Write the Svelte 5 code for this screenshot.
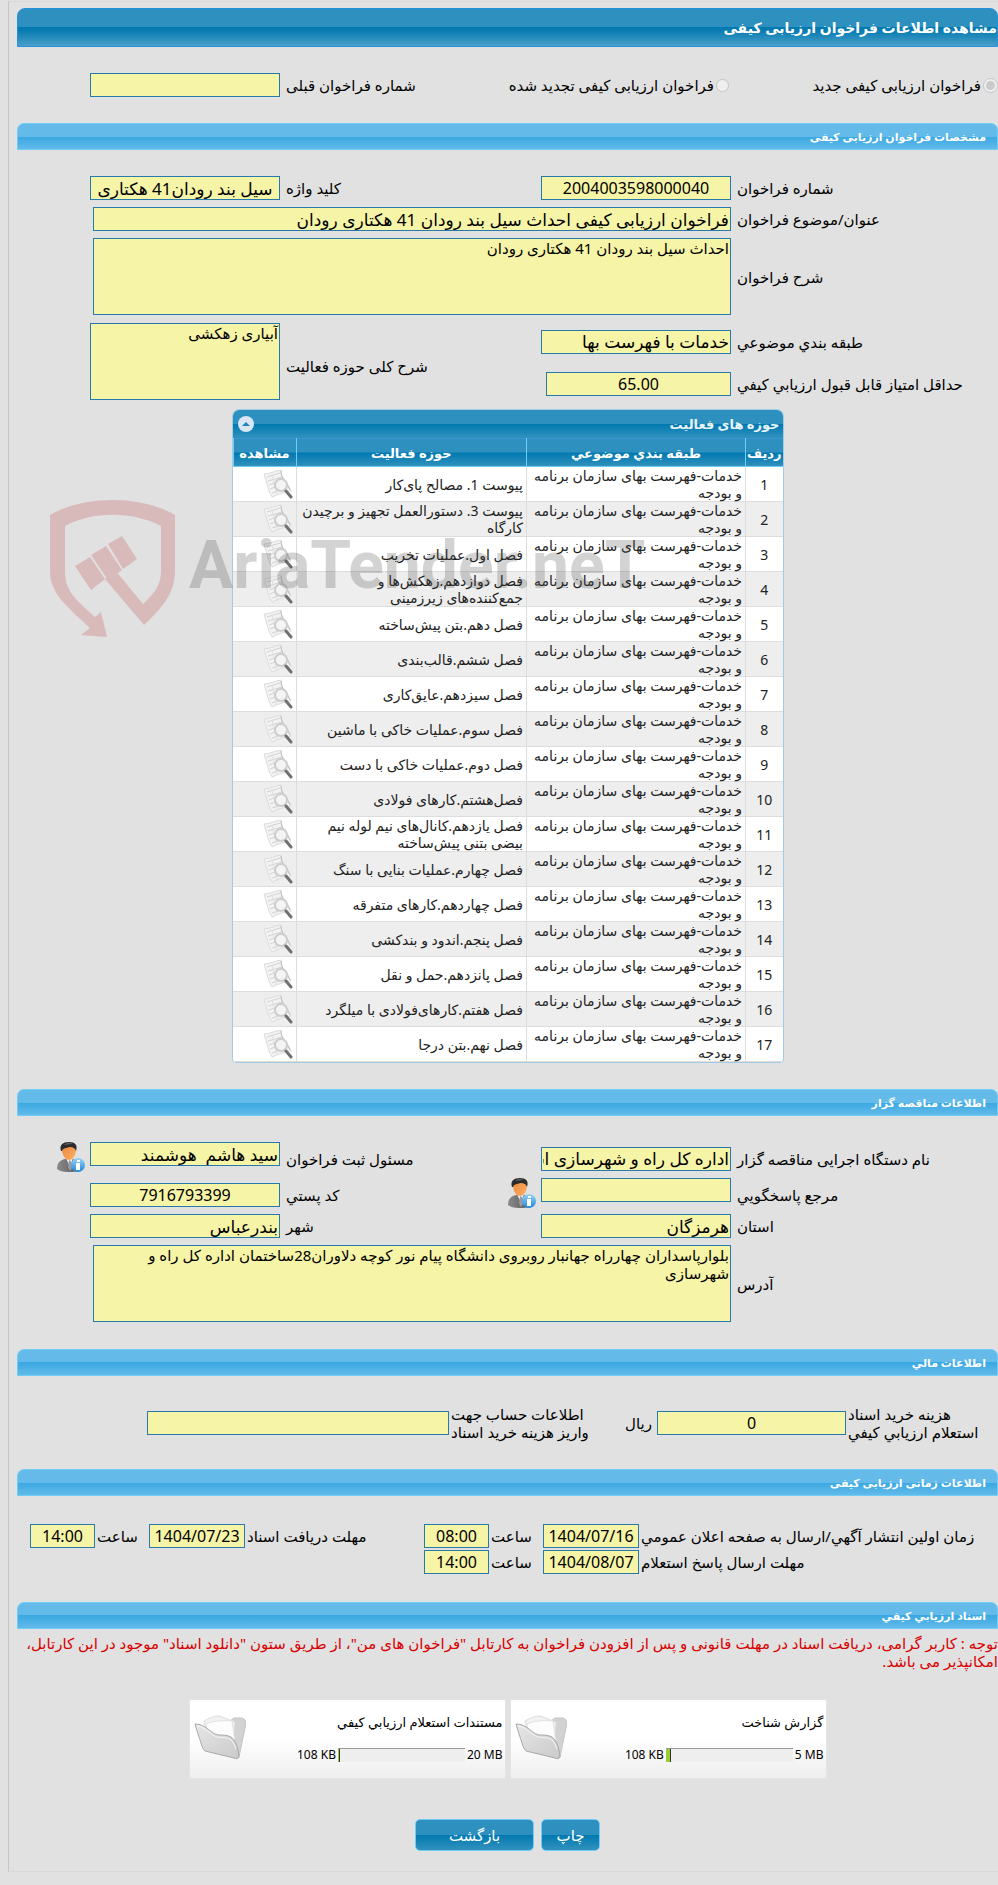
<!--
  Read-only view of a qualitative-evaluation call: the call itself, its
  activity areas, the tendering organisation, fees, dates and documents.
  The whole page runs right to left.
-->
<script>
  const category = 'خدمات-فهرست بهای سازمان برنامه و بودجه';

  const activities = [
    'پیوست 1. مصالح پای‌کار',
    'پیوست 3. دستورالعمل تجهیز و برچیدن کارگاه',
    'فصل اول.عملیات تخریب',
    'فصل دوازدهم.زهکش‌ها و جمع‌کننده‌های زیرزمینی',
    'فصل دهم.بتن پیش‌ساخته',
    'فصل ششم.قالب‌بندی',
    'فصل سیزدهم.عایق‌کاری',
    'فصل سوم.عملیات خاکی با ماشین',
    'فصل دوم.عملیات خاکی با دست',
    'فصل‌هشتم.کارهای فولادی',
    'فصل یازدهم.کانال‌های نیم لوله نیم بیضی بتنی پیش‌ساخته',
    'فصل چهارم.عملیات بنایی با سنگ',
    'فصل چهاردهم.کارهای متفرقه',
    'فصل پنجم.اندود و بندکشی',
    'فصل پانزدهم.حمل و نقل',
    'فصل هفتم.کارهای‌فولادی با میلگرد',
    'فصل نهم.بتن درجا',
  ];

  const documents = [
    { title: 'گزارش شناخت', limit: '5 MB', size: '108 KB', percent: 4 },
    { title: 'مستندات استعلام ارزیابي کیفي', limit: '20 MB', size: '108 KB', percent: 2 },
  ];

  let open = $state(true);
  let kind = $state('new');
</script>

{#snippet person()}
  <svg class="person" viewBox="0 0 28 30" aria-hidden="true">
    <path d="M0 27c0-6 3-9 8-10h8c4 1 7 4 7 8v3c-3 2-8 2-12 2-5 0-9-1-11-3z" fill="url(#suit)" />
    <path d="M9 16l4 9 3-9z" fill="#f4f4f6" />
    <path d="M12 18l2 1 1 7-2 3-2-4z" fill="#9a9aa2" />
    <path d="M5 7c0-4 3-6 7-6s7 2 7 6c0 6-3 11-7 11S5 13 5 7z" fill="url(#skin)" />
    <path d="M4 9C2 3 6 0 12 0s9 3 7 9c-1-3-3-4-6-4-4 1-7 1-8 4z" fill="#2c2c2c" />
    <path d="M7 3c2-2 6-2 9-1-3 0-6 0-9 1z" fill="#777" />
    <circle cx="21" cy="23" r="7" fill="url(#info)" />
    <path d="M20 18h3v2h-3zM19 21h4v7h-4z" fill="#fff" />
  </svg>
{/snippet}

{#snippet folder()}
  <svg class="folder" viewBox="0 0 52 48" aria-hidden="true">
    <path d="M20 8l16-2 4-3 8 0c3 1 4 3 4 5l-7 34-3 1z" fill="#d2d2d2" stroke="#c4c4c4" />
    <path d="M10 6c5-3 10-5 15-5l16 6-2 24-26-12z" fill="#f2f2f2" stroke="#dcdcdc" />
    <path d="M12 9c6-3 15-4 26-3l3 22-28-9z" fill="#fdfdfd" stroke="#e2e2e2" />
    <path d="M1 9c3 0 7 1 10 3 5 3 8 7 13 8 5 0 9 0 13 2 4 3 6 9 7 13l1 7c-1 2-3 2-5 1L11 36c-2-2-3-4-4-8C5 22 3 16 1 9z" fill="url(#flap)" stroke="#a8a8a8" />
    <path d="M3 11c9 1 13 9 20 11 6 1 10 0 14 3 3 3 4 6 5 9" fill="none" stroke="#f6f6f6" />
  </svg>
{/snippet}

{#snippet viewIcon()}
  <svg class="view-icon" viewBox="0 0 30 30" aria-hidden="true">
    <path d="M1 5C7 5 11 2 18 1c0 6 3 9 6 13l4 8c-7 1-13 3-19 6C5 22 4 14 1 5z" fill="#f3f3f3" stroke="#dcdcdc" />
    <path d="M4 8l13-4M5 12l14-4M6 16l8-3M7 20l5-2M9 24l9-3" fill="none" stroke="#d2d2d2" />
    <path d="M9 6l5 20" fill="none" stroke="#e0e0e0" />
    <path d="M18 2c0 6 3 9 6 13l3 6" fill="none" stroke="#bdbdbd" />
    <circle cx="18" cy="16" r="6" fill="#f4f4f4" stroke="#cdcdcd" stroke-width="2" />
    <path d="M23 22l5 6" stroke="#707070" stroke-width="3" stroke-linecap="round" />
  </svg>
{/snippet}

<svg class="defs" aria-hidden="true">
  <defs>
    <linearGradient id="suit" x1="0" x2="1"><stop offset="0" stop-color="#8b8b8b" /><stop offset="1" stop-color="#555" /></linearGradient>
    <linearGradient id="skin" x1="0" x2="1" y2="1"><stop offset="0" stop-color="#e8843c" /><stop offset="1" stop-color="#ffb062" /></linearGradient>
    <linearGradient id="info" x2="0" y2="1"><stop offset="0" stop-color="#9bd4f7" /><stop offset="1" stop-color="#1e86dc" /></linearGradient>
    <linearGradient id="flap" x2="1" y2="1"><stop offset="0" stop-color="#e6e6e6" /><stop offset="1" stop-color="#cacaca" /></linearGradient>
  </defs>
</svg>

<main class="page" dir="rtl" lang="fa">
  <h1 class="title">مشاهده اطلاعات فراخوان ارزیابی کیفی</h1>

  <div class="row kinds">
    <div class="kind">
      <input type="radio" id="kind-new" value="new" bind:group={kind} disabled />
      <label for="kind-new">فراخوان ارزیابی کیفی جدید</label>
    </div>
    <div class="kind">
      <input type="radio" id="kind-renewed" value="renewed" bind:group={kind} disabled />
      <label for="kind-renewed">فراخوان ارزیابی کیفی تجدید شده</label>
    </div>
    <label class="label" for="previous">شماره فراخوان قبلی</label>
    <input class="field" id="previous" readonly />
  </div>

  <h2 class="bar">مشخصات فراخوان ارزیابی کیفی</h2>
  <section class="body">
    <div class="row">
      <label class="label" for="number">شماره فراخوان</label>
      <input class="field digits" id="number" value="2004003598000040" readonly />
      <label class="label" for="keyword">کلید واژه</label>
      <input class="field center" id="keyword" value="سیل بند رودان41 هکتاری" readonly />
    </div>
    <div class="row">
      <label class="label" for="subject">عنوان/موضوع فراخوان</label>
      <input class="field wide" id="subject" value="فراخوان ارزیابی کیفی احداث سیل بند رودان 41 هکتاری رودان" readonly />
    </div>
    <div class="row">
      <label class="label" for="description">شرح فراخوان</label>
      <textarea class="field area wide" id="description" readonly>احداث سیل بند رودان 41 هکتاری رودان</textarea>
    </div>
    <div class="row scope">
      <label class="label" for="classification">طبقه بندي موضوعي</label>
      <input class="field" id="classification" value="خدمات با فهرست بها" readonly />
      <label class="label tall" for="scope">شرح کلی حوزه فعالیت</label>
      <textarea class="field area tall" id="scope" readonly>آبیاری زهکشی</textarea>
      <label class="label" for="score">حداقل امتیاز قابل قبول ارزیابي کیفي</label>
      <input class="field digits score" id="score" value="65.00" readonly />
    </div>

    <div class="grid-box">
      <div class="grid-caption">
        <h3 id="grid-title">حوزه های فعالیت</h3>
        <button type="button" class="toggle" aria-label="حوزه های فعالیت" aria-expanded={open} onclick={() => (open = !open)}>
          <svg viewBox="0 0 16 16" aria-hidden="true"><path d="M4 10l4-4 4 4z" fill="#1f84b8" /></svg>
        </button>
      </div>
      {#if open}
        <table aria-labelledby="grid-title">
          <thead>
            <tr>
              <th class="col-number">ردیف</th>
              <th class="col-category">طبقه بندي موضوعي</th>
              <th>حوزه فعالیت</th>
              <th class="col-view">مشاهده</th>
            </tr>
          </thead>
          <tbody>
            {#each activities as activity, i}
              <tr>
                <td class="number">{i + 1}</td>
                <td>{category}</td>
                <td>{activity}</td>
                <td class="view"><a href="#view-{i + 1}" aria-label="مشاهده">{@render viewIcon()}</a></td>
              </tr>
            {/each}
          </tbody>
        </table>
      {/if}
    </div>
  </section>

  <h2 class="bar">اطلاعات مناقصه گزار</h2>
  <section class="body">
    <div class="row contact">
      <label class="label" for="agency">نام دستگاه اجرایی مناقصه گزار</label>
      <input class="field" id="agency" value="اداره کل راه و شهرسازی استان هرمزگان" readonly />
      <label class="label" for="registrar">مسئول ثبت فراخوان</label>
      <div class="with-icon">
        <input class="field" id="registrar" value="سید هاشم  هوشمند" readonly />
        {@render person()}
      </div>
    </div>
    <div class="row contact">
      <label class="label" for="authority">مرجع پاسخگويي</label>
      <div class="with-icon">
        <input class="field" id="authority" readonly />
        {@render person()}
      </div>
      <label class="label" for="postcode">کد پستي</label>
      <input class="field digits" id="postcode" value="7916793399" readonly />
    </div>
    <div class="row">
      <label class="label" for="province">استان</label>
      <input class="field" id="province" value="هرمزگان" readonly />
      <label class="label" for="city">شهر</label>
      <input class="field" id="city" value="بندرعباس" readonly />
    </div>
    <div class="row">
      <label class="label" for="address">آدرس</label>
      <textarea class="field area wide" id="address" readonly>بلوارپاسداران چهارراه جهانبار روبروی دانشگاه پیام نور کوچه دلاوران28ساختمان اداره کل راه و شهرسازی</textarea>
    </div>
  </section>

  <h2 class="bar">اطلاعات مالي</h2>
  <section class="body">
    <div class="fees">
      <label class="label tight" for="fee">هزینه خرید اسناد<br />استعلام ارزیابي کیفي</label>
      <input class="field digits" id="fee" value="0" readonly />
      <span class="unit">ریال</span>
      <label class="label tight" for="account">اطلاعات حساب جهت<br />واریز هزینه خرید اسناد</label>
      <input class="field" id="account" readonly />
    </div>
  </section>

  <h2 class="bar">اطلاعات زمانی ارزیابی کیفی</h2>
  <section class="body">
    <div class="dates">
      <label class="label tight" for="publish-date">زمان اولین انتشار آگهي/ارسال به صفحه اعلان عمومي</label>
      <input class="field digits" id="publish-date" value="1404/07/16" readonly />
      <label class="label tight" for="publish-time">ساعت</label>
      <input class="field digits" id="publish-time" value="08:00" readonly />
      <label class="label tight" for="receive-date">مهلت دریافت اسناد</label>
      <input class="field digits" id="receive-date" value="1404/07/23" readonly />
      <label class="label tight" for="receive-time">ساعت</label>
      <input class="field digits" id="receive-time" value="14:00" readonly />

      <label class="label tight" for="reply-date">مهلت ارسال پاسخ استعلام</label>
      <input class="field digits" id="reply-date" value="1404/08/07" readonly />
      <label class="label tight" for="reply-time">ساعت</label>
      <input class="field digits" id="reply-time" value="14:00" readonly />
    </div>
  </section>

  <h2 class="bar">اسناد ارزیابي کیفي</h2>
  <p class="notice">
    توجه : کاربر گرامی، دریافت اسناد در مهلت قانونی و پس از افزودن فراخوان به کارتابل "فراخوان های من"، از طریق ستون "دانلود اسناد" موجود در این کارتابل، امکانپذیر می باشد.
  </p>

  <div class="documents">
    {#each documents as doc}
      <article class="document">
        <div class="document-info">
          <h3>{doc.title}</h3>
          <div class="usage">
            <span class="limit" dir="ltr">{doc.limit}</span>
            <span class="meter"><span class="used" style="width: {doc.percent}%"></span></span>
            <span dir="ltr">{doc.size}</span>
          </div>
        </div>
        {@render folder()}
      </article>
    {/each}
  </div>

  <div class="actions">
    <button type="button" class="print" onclick={() => window.print()}>چاپ</button>
    <button type="button" class="back" onclick={() => history.back()}>بازگشت</button>
  </div>

  <div class="watermark" dir="ltr" aria-hidden="true">
    <svg viewBox="0 0 125 137">
      <path d="M0 15C34-5 91-5 125 15v56c0 22-12 36-31 54L55 79l10-9 28 34c13-12 18-20 18-33V26C82 11 43 11 15 26v45c0 20 10 28 30 46l6-5 6 25-26-2 9-7C14 104 0 92 0 71z" fill="#bf3b41" />
      <path d="M25 66l15-9 15 22-14 11zM41 55l15-9 16 24-14 10zM58 44l14-8 15 23-14 10z" fill="#bf3b41" />
    </svg>
    <span>AriaTender.neT</span>
  </div>
</main>

<style>
  :global(body) {
    background: #e1e1e1;
  }
  .defs { position: absolute; width: 0; height: 0; }
  .page {
    position: relative;
    margin: 1px 0 14px 8px;
    padding: 6px 0 20px 8px;
    border: 1px solid #d8d8d8;
    border-left-color: #c6c6c6;
    border-right: 0;
    color: #000;
    font-family: "Noto Sans", "DejaVu Sans", sans-serif;
    font-size: 15px;
    line-height: 18px;
  }

  h1, h2, h3, p { margin: 0; }
  .title {
    box-sizing: border-box;
    height: 39px;
    border: 1px solid #2191e2;
    border-radius: 8px 8px 0 0;
    background: linear-gradient(#2e90be 50%, #0079b0 50%, #0a7db3 60%, #4a9fc8);
    color: #fff;
    font-size: 14px;
    line-height: 37px;
  }
  .bar {
    box-sizing: border-box;
    height: 27px;
    padding: 0 11px;
    border: 1px solid #6fcdf6;
    border-radius: 7px 7px 0 0;
    background: linear-gradient(#64bbea 50%, #3aa8e2 50%, #62bae9);
    color: #fff;
    font-size: 11px;
    line-height: 25px;
  }
  .body {
    display: flex;
    flex-direction: column;
    gap: 7px;
    padding: 26px 0 27px;
  }

  .row {
    display: grid;
    grid-template-columns: 267fr 190px 261fr 190px;
    align-items: center;
    padding-left: 73px;
  }
  .kinds {
    grid-template-columns: 269fr 188px 261fr 190px;
    padding-top: 26px;
    padding-bottom: 26px;
  }
  .kind {
    display: flex;
    align-items: center;
    gap: 2px;
    white-space: nowrap;
  }
  .kind input {
    width: 15px;
    height: 15px;
    margin: 0;
  }
  .contact { min-height: 33px; margin-bottom: -4px; }
  .scope {
    grid-template-rows: 37px 48px;
    margin-top: 1px;
  }
  .tall { grid-row: 1 / 3; }
  .scope .area { grid-column: 4; align-self: start; }
  .scope .label.tall { grid-column: 3; }

  .label {
    padding-left: 6px;
    text-align: left;
  }
  .tight { padding-left: 2px; }
  .field {
    box-sizing: border-box;
    width: 100%;
    height: 24px;
    margin: 0;
    padding: 0 1px;
    border: 1px solid #267bab;
    border-radius: 0;
    background: #f6f4a6;
    color: #000;
    font: 17px "Noto Sans", "DejaVu Sans", sans-serif;
    outline: 0;
  }
  .center { text-align: center; }
  .digits { font-size: 16px; text-align: center; }
  .wide {
    grid-column: 2 / 5;
    width: calc(100% - 3px);
  }
  .area {
    display: block;
    height: 77px;
    font-size: 15px;
    line-height: 18px;
    resize: none;
  }
  .score { width: 185px; }
  .with-icon {
    display: flex;
    align-self: start;
    gap: 5px;
  }
  .with-icon .field { flex: none; }
  .person { flex: none; width: 28px; height: 30px; }

  .grid-box {
    align-self: center;
    box-sizing: border-box;
    width: 552px;
    margin: -6px 0 -1px;
    border: 1px solid #a3cbe4;
    border-radius: 7px 7px 4px 4px;
    background: #fff;
    overflow: hidden;
  }
  .grid-caption {
    display: flex;
    align-items: center;
    justify-content: space-between;
    height: 28px;
    padding: 0 3px 0 5px;
    background: linear-gradient(#2e90be 50%, #0079b0 50%, #3391be);
    color: #e8f4fb;
  }
  .grid-caption h3 { font-size: 13px; }
  .toggle {
    width: 16px;
    height: 16px;
    padding: 0;
    border: 0;
    border-radius: 50%;
    background: #dbe6f5;
    cursor: pointer;
  }
  .toggle svg { display: block; }
  table {
    width: 100%;
    table-layout: fixed;
    border-collapse: collapse;
  }
  th {
    box-sizing: border-box;
    height: 28px;
    padding: 0;
    border: 1px solid #6fcdf6;
    border-top-color: #3a92d8;
    border-right: 0;
    background: linear-gradient(#2e90be 50%, #0079b0 50%, #3391be);
    color: #fff;
    font-size: 13px;
  }
  .col-number { width: 37px; }
  .col-category { width: 219px; }
  .col-view { width: 63px; }
  td {
    box-sizing: border-box;
    height: 35px;
    padding: 0 3px;
    border-bottom: 1px solid #ddd;
    border-left: 1px solid #ddd;
    color: #222;
    font-size: 14px;
    line-height: 17px;
  }
  td:last-child { border-left: 0; }
  tr:nth-child(even) td { background: #eee; }
  .number { text-align: center; }
  .view a { display: block; }
  .view-icon { display: block; width: 30px; height: 30px; }

  .fees {
    display: grid;
    grid-template-columns: 152fr 189px 68fr 140fr 302px;
    align-items: center;
    padding: 3px 0 1px 130px;
    white-space: nowrap;
  }
  .unit { padding-right: 5px; }
  .dates {
    display: grid;
    grid-template-columns: 359fr 96px 54px 65px 179fr 96px 54px 65px;
    align-items: center;
    row-gap: 2px;
    padding: 2px 0 1px 13px;
    white-space: nowrap;
  }

  .notice { padding: 5px 0 8px; color: #d90000; }
  .documents {
    display: flex;
    justify-content: center;
    gap: 4px;
    padding: 21px 0 40px;
  }
  .document {
    box-sizing: border-box;
    display: flex;
    justify-content: space-between;
    width: 317px;
    height: 80px;
    padding: 13px 2px 0 4px;
    border: 1px solid #e4e4e4;
    background: linear-gradient(#fff 50%, #eee);
    font-size: 12px;
  }
  .document h3 { font-size: 13px; font-weight: normal; }
  .usage {
    display: flex;
    align-items: center;
    gap: 2px;
    margin-top: 15px;
  }
  .limit { min-width: 28px; text-align: right; }
  .meter {
    box-sizing: border-box;
    width: 127px;
    height: 14px;
    border-top: 1px solid #999;
    background: #eee;
    direction: ltr;
  }
  .used {
    display: block;
    box-sizing: border-box;
    height: 13px;
    border-right: 1px solid #333;
    background: #9acd32;
  }
  .folder { width: 52px; height: 48px; margin-top: 2px; }

  .actions {
    display: flex;
    justify-content: center;
    gap: 7px;
  }
  .actions button {
    height: 32px;
    padding: 0;
    border: 1px solid #6fcdf6;
    border-radius: 5px;
    background: linear-gradient(#2e90be 50%, #0079b0 50%, #3391be);
    color: #fff;
    font: 15px "Noto Sans", "DejaVu Sans", sans-serif;
    cursor: pointer;
  }
  .print { width: 59px; }
  .back { width: 119px; }

  /* site mark laid over the form and the table */
  .watermark {
    position: absolute;
    top: 498px;
    left: 41px;
    display: flex;
    align-items: flex-start;
    gap: 14px;
    opacity: 0.23;
    pointer-events: none;
  }
  .watermark svg { width: 125px; height: 137px; }
  .watermark span {
    color: #444;
    font: bold 66px/132px Roboto, sans-serif;
    white-space: nowrap;
  }
</style>
